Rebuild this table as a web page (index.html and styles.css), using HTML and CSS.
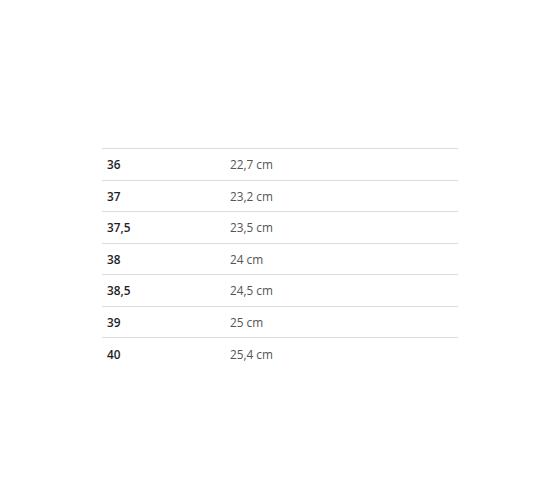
FILE: index.html
```html
<!DOCTYPE html>
<html>
<head>
<meta charset="utf-8">
<link rel="stylesheet" href="styles.css">
</head>
<body>
<div class="page">
<table class="sizes">
<tbody>
<tr><th>36</th><td>22,7 cm</td></tr>
<tr><th>37</th><td>23,2 cm</td></tr>
<tr><th>37,5</th><td>23,5 cm</td></tr>
<tr><th>38</th><td>24 cm</td></tr>
<tr><th>38,5</th><td>24,5 cm</td></tr>
<tr><th>39</th><td>25 cm</td></tr>
<tr><th>40</th><td>25,4 cm</td></tr>
</tbody>
</table>
</div>
</body>
</html>
```
FILE: styles.css
```css
html, body {
  margin: 0;
  padding: 0;
  background: #fff;
}
.page {
  padding-top: 148px;
  display: flex;
  justify-content: center;
}
.sizes {
  width: 356px;
  border-collapse: collapse;
  font-family: "Open Sans", sans-serif;
  font-size: 11.8px;
}
.sizes tr {
  border-top: 1px solid #dcdcdc;
  height: 31.5px;
}
.sizes th {
  text-align: left;
  font-weight: 600;
  color: #1e1e1e;
  width: 113px;
  padding: 0 5px;
}
.sizes td {
  color: #555;
  padding: 0 5px;
}
```
